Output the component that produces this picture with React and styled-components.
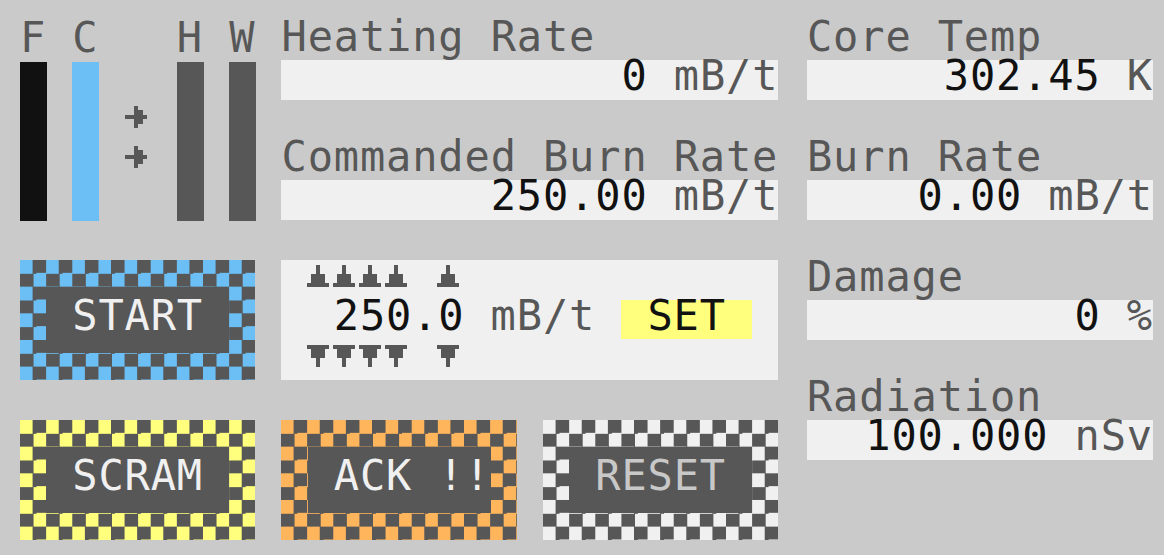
import styled, { createGlobalStyle } from 'styled-components';

const CELL = 26.15;

const GlobalStyle = createGlobalStyle`
  html, body {
    margin: 0;
    padding: 0;
    background: #cacaca;
  }
  body {
    font-family: "DejaVu Sans Mono", "Liberation Mono", monospace;
  }
`;

const Screen = styled.div`
  width: 1164px;
  height: 555px;
  box-sizing: border-box;
  padding: 20px 0 0 20px;
  background: #cacaca;
  display: flex;
  gap: 28.6px;
  overflow: hidden;
  font-family: "DejaVu Sans Mono", "Liberation Mono", monospace;
  font-size: 42px;
  line-height: 40px;
  letter-spacing: 0.86px;
  color: #575757;
  white-space: pre;
`;

const LeftPane = styled.div`
  width: ${29 * CELL}px;
  display: flex;
  flex-direction: column;
  gap: 40px;
`;

const RightPane = styled.div`
  width: 346px;
  display: flex;
  flex-direction: column;
  gap: 40px;
`;

const Row = styled.div`
  display: flex;
  gap: ${CELL}px;
  height: ${(p) => p.$height}px;
`;

const Gauges = styled.div`
  width: ${9 * CELL}px;
  display: grid;
  grid-template-columns: repeat(9, ${CELL}px);
  grid-template-rows: 40px 160px;
`;

const GaugeLabel = styled.div`
  grid-column: ${(p) => p.$col + 1};
  grid-row: 1;
  line-height: 36px;
`;

const GaugeBar = styled.div`
  grid-column: ${(p) => p.$col + 1};
  grid-row: 2;
  width: 27px;
  height: 159px;
  margin-top: 2px;
  background: ${(p) => p.$color};
`;

const ArrowStack = styled.div`
  grid-column: 5;
  grid-row: 2;
  display: flex;
  flex-direction: column;
  gap: 18px;
  padding-top: 46px;
`;

const Readouts = styled.div`
  width: ${19 * CELL}px;
  display: flex;
  flex-direction: column;
  gap: 40px;
`;

const Readout = styled.div`
  display: flex;
  flex-direction: column;
`;

const Label = styled.div`
  height: 40px;
  line-height: 34px;
  color: #575757;
`;

const ValueBox = styled.div`
  height: 40px;
  line-height: 32px;
  background: #f0f0f0;
  text-align: right;
`;

const Num = styled.span`
  color: #111111;
`;

const Unit = styled.span`
  color: #575757;
`;

const CheckerButton = styled.div`
  width: ${9 * CELL}px;
  height: 120px;
  box-sizing: border-box;
  padding: 26.67px ${CELL}px;
  background: repeating-conic-gradient(#575757 0 25%, ${(p) => p.$color} 0 50%) 0 0 / ${CELL}px 26.67px;
`;

const ButtonFace = styled.div`
  height: 100%;
  box-sizing: border-box;
  background: #575757;
  padding: 13.33px 0 0 ${CELL}px;
  line-height: 32px;
  color: ${(p) => p.$text};
`;

const ControlPanel = styled.div`
  width: ${19 * CELL}px;
  height: 120px;
  background: #f0f0f0;
  display: grid;
  grid-template-columns: repeat(19, ${CELL}px);
  grid-template-rows: repeat(3, 40px);
  line-height: 32px;
`;

const StepCell = styled.div`
  grid-column: ${(p) => p.$col};
  grid-row: ${(p) => p.$row};
  padding-top: 5px;
  margin-left: -1px;
`;

const SetValue = styled.div`
  grid-column: 2 / span 6;
  grid-row: 2;
  color: #111111;
`;

const SetUnit = styled.div`
  grid-column: 9 / span 4;
  grid-row: 2;
  color: #575757;
`;

const SetButton = styled.div`
  grid-column: 14 / span 5;
  grid-row: 2;
  height: 39px;
  background: #ffff7d;
  color: #111111;
  padding-left: ${CELL}px;
`;

const GLYPHS = {
  up: [[2, 0, 1, 2], [1, 2, 3, 2], [0, 4, 5, 1]],
  down: [[0, 0, 5, 1], [1, 1, 3, 2], [2, 3, 1, 2]],
  right: [[2, 0, 1, 5], [3, 1, 1, 3], [0, 2, 5, 1]],
};

const Glyph = ({ kind }) => (
  <svg width="22" height="22" viewBox="0 0 5 5" shapeRendering="crispEdges" style={{ display: 'block' }}>
    {GLYPHS[kind].map(([x, y, w, h], i) => (
      <rect key={i} x={x} y={y} width={w} height={h} fill="#575757" />
    ))}
  </svg>
);

const gauges = [
  { label: 'F', col: 0, color: '#111111' },
  { label: 'C', col: 2, color: '#6cbff5' },
  { label: 'H', col: 6, color: '#575757' },
  { label: 'W', col: 8, color: '#575757' },
];

const leftReadouts = [
  { label: 'Heating Rate', value: '0', unit: 'mB/t' },
  { label: 'Commanded Burn Rate', value: '250.00', unit: 'mB/t' },
];

const rightReadouts = [
  { label: 'Core Temp', value: '302.45', unit: 'K' },
  { label: 'Burn Rate', value: '0.00', unit: 'mB/t' },
  { label: 'Damage', value: '0', unit: '%' },
  { label: 'Radiation', value: '100.000', unit: 'nSv' },
];

const setpoint = ' 250.0';

const ReadoutBlock = ({ label, value, unit }) => (
  <Readout>
    <Label>{label}</Label>
    <ValueBox>
      <Num>{value}</Num> <Unit>{unit}</Unit>
    </ValueBox>
  </Readout>
);

const Button = ({ color, text, children }) => (
  <CheckerButton $color={color}>
    <ButtonFace $text={text}>{children}</ButtonFace>
  </CheckerButton>
);

export default function App() {
  return (
    <>
      <GlobalStyle />
      <Screen>
        <LeftPane>
          <Row $height={200}>
            <Gauges>
              {gauges.map((g) => (
                <GaugeLabel key={g.label} $col={g.col}>{g.label}</GaugeLabel>
              ))}
              {gauges.map((g) => (
                <GaugeBar key={g.label} $col={g.col} $color={g.color} />
              ))}
              <ArrowStack>
                <Glyph kind="right" />
                <Glyph kind="right" />
              </ArrowStack>
            </Gauges>
            <Readouts>
              {leftReadouts.map((r) => (
                <ReadoutBlock key={r.label} {...r} />
              ))}
            </Readouts>
          </Row>

          <Row $height={120}>
            <Button color="#6cbff5" text="#f0f0f0">START</Button>
            <ControlPanel>
              {setpoint.split('').map((ch, i) =>
                ch === '.' ? null : (
                  <StepCell key={'u' + i} $col={i + 2} $row={1}>
                    <Glyph kind="up" />
                  </StepCell>
                )
              )}
              <SetValue>{setpoint}</SetValue>
              <SetUnit>mB/t</SetUnit>
              <SetButton>SET</SetButton>
              {setpoint.split('').map((ch, i) =>
                ch === '.' ? null : (
                  <StepCell key={'d' + i} $col={i + 2} $row={3}>
                    <Glyph kind="down" />
                  </StepCell>
                )
              )}
            </ControlPanel>
          </Row>

          <Row $height={120}>
            <Button color="#ffff7d" text="#f0f0f0">SCRAM</Button>
            <Button color="#ffb55c" text="#f0f0f0">ACK !!</Button>
            <Button color="#f0f0f0" text="#c8c8c8">RESET</Button>
          </Row>
        </LeftPane>

        <RightPane>
          {rightReadouts.map((r) => (
            <ReadoutBlock key={r.label} {...r} />
          ))}
        </RightPane>
      </Screen>
    </>
  );
}
